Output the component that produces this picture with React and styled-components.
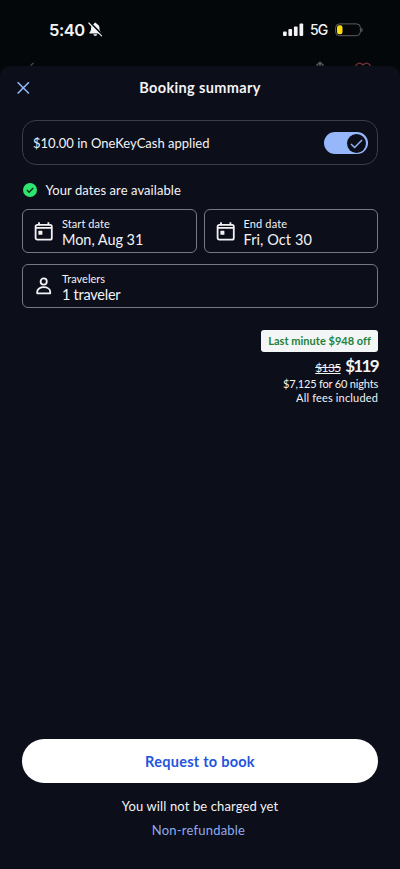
import React from 'react';
import styled, { createGlobalStyle } from 'styled-components';

const GlobalStyle = createGlobalStyle`
  * { box-sizing: border-box; }
  body { margin: 0; background: #04070a; }
`;

const Screen = styled.div`
  height: 869px;
  display: flex;
  flex-direction: column;
  overflow: hidden;
  background: #04070a;
  color: #f3f3f5;
  font-family: Lato, "Open Sans", sans-serif;
`;

const StatusBar = styled.header`
  height: 61px;
  display: flex;
  align-items: center;
  justify-content: space-between;
  padding: 0 37px 2px 49px;
  font-family: Inter, sans-serif;
`;

const StatusGroup = styled.div`
  display: flex;
  align-items: center;
  svg { display: block; }
`;

const Clock = styled.span`
  width: 39px;
  font-size: 16.5px;
  font-weight: 600;
  letter-spacing: -0.5px;
  white-space: nowrap;
`;

const Network = styled.span`
  width: 25px;
  margin-left: 6px;
  font-size: 14px;
  font-weight: 500;
  letter-spacing: -0.8px;
`;

const PagePeek = styled.div`
  height: 5px;
  display: flex;
  justify-content: space-between;
  padding: 0 27px 0 28px;
  svg { display: block; }
`;

const PeekActions = styled.div`
  display: flex;
  gap: 28px;
`;

const Sheet = styled.main`
  flex: 1;
  display: flex;
  flex-direction: column;
  padding: 0 22px;
  border-radius: 10px 10px 0 0;
  background: #0c0e1a;
`;

const SheetHeader = styled.div`
  height: 43px;
  display: grid;
  grid-template-columns: 18px 1fr 18px;
  align-items: center;
  margin-left: -7px;
  margin-right: -7px;
`;

const Title = styled.h1`
  margin: 0;
  text-align: center;
  font-size: 14.5px;
  font-weight: 700;
  line-height: 20px;
  letter-spacing: 0.36px;
`;

const CloseButton = styled.button`
  display: flex;
  width: 16px;
  padding: 0;
  border: 0;
  background: none;
`;

const CashCard = styled.section`
  height: 45px;
  display: flex;
  align-items: center;
  justify-content: space-between;
  margin-top: 11px;
  padding: 1px 9.5px 0 10px;
  border: 1px solid #3b3d49;
  border-radius: 14px;
`;

const Label = styled.span`
  font-size: ${(p) => p.$size || 13}px;
  line-height: ${(p) => p.$line || 18}px;
  letter-spacing: ${(p) => p.$track || 0}px;
  color: ${(p) => p.$color || 'inherit'};
  white-space: nowrap;
`;

const Toggle = styled.button`
  width: 44px;
  height: 22px;
  display: flex;
  align-items: center;
  justify-content: flex-end;
  padding: 0 1.5px;
  border: 0;
  border-radius: 11px;
  background: #96b8fa;
`;

const Knob = styled.span`
  width: 19px;
  height: 19px;
  display: grid;
  place-items: center;
  border-radius: 50%;
  background: #0c0e1a;
`;

const Availability = styled.div`
  height: 18px;
  display: flex;
  align-items: center;
  gap: 8.5px;
  margin-top: 16px;
  padding-left: 1px;
`;

const Fields = styled.div`
  display: grid;
  grid-template-columns: 1fr 1fr;
  gap: 11px 7px;
  margin-top: 10px;
`;

const FieldBox = styled.button`
  grid-column: ${(p) => (p.$wide ? '1 / -1' : 'auto')};
  height: 44px;
  display: flex;
  align-items: center;
  gap: 8px;
  padding: 0 11px;
  border: 1px solid #767884;
  border-radius: 6px;
  background: none;
  color: inherit;
  font: inherit;
  text-align: left;
  svg { display: block; }
`;

const FieldText = styled.span`
  display: flex;
  flex-direction: column;
  padding-top: 2px;
`;

const PriceBlock = styled.section`
  display: flex;
  flex-direction: column;
  align-items: flex-end;
  margin-top: 22px;
`;

const Badge = styled.span`
  height: 22px;
  padding: 0 7px;
  border-radius: 3px;
  background: #f4f5f6;
  color: #1c823c;
  font-size: 11px;
  font-weight: 700;
  line-height: 22px;
  letter-spacing: 0.03px;
`;

const PriceRow = styled.div`
  height: 25px;
  display: flex;
  align-items: baseline;
  gap: 4.5px;
  line-height: 27px;
`;

const OldPrice = styled.s`
  font-size: 12px;
  letter-spacing: -0.6px;
  text-decoration: underline line-through;
`;

const Price = styled.strong`
  margin-right: -1px;
  font-size: 17px;
  font-weight: 700;
  letter-spacing: -1.7px;
  padding-right: 1.2px;
`;

const Footer = styled.footer`
  display: flex;
  flex-direction: column;
  align-items: center;
  margin-top: auto;
  padding-bottom: 24px;
`;

const BookButton = styled.button`
  width: 100%;
  height: 44px;
  margin-bottom: 14px;
  border: 0;
  border-radius: 22px;
  background: #fff;
  color: #1f55dc;
  font-family: inherit;
  font-size: 14.5px;
  font-weight: 700;
  letter-spacing: 0.26px;
`;

const RefundLink = styled.a`
  padding-right: 3px;
  color: #8eabeb;
  font-size: 13px;
  line-height: 30px;
  letter-spacing: 0.2px;
`;

const CalendarIcon = () => (
  <svg width="20" height="20" viewBox="0 0 20 20" fill="none">
    <rect x="1.600" y="3.800" width="16.200" height="14.800" rx="1.700" stroke="#f3f3f5" strokeWidth="1.800" />
    <path d="M1.800 6.900h15.800M5 1.200v3M14.400 1.200v3" stroke="#f3f3f5" strokeWidth="1.800" />
    <rect x="4.400" y="9.800" width="4" height="4" rx=".6" fill="#f3f3f5" />
  </svg>
);

const PersonIcon = () => (
  <svg width="20" height="20" viewBox="0 0 20 20" fill="none" stroke="#f3f3f5" strokeWidth="1.800">
    <circle cx="9.700" cy="5.500" r="3.100" />
    <path d="M3.200 17.300v-1.600c0-2.800 3-4.500 6.500-4.500s6.500 1.700 6.500 4.500v1.600Z" strokeLinejoin="round" />
  </svg>
);

const Field = ({ icon, label, value, wide, labelTrack, valueTrack }) => (
  <FieldBox $wide={wide}>
    {icon}
    <FieldText>
      <Label $size={11} $line={15} $track={labelTrack}>{label}</Label>
      <Label $size={14.5} $line={18} $track={valueTrack}>{value}</Label>
    </FieldText>
  </FieldBox>
);

export default function App() {
  return (
    <Screen>
      <GlobalStyle />
      <StatusBar>
        <StatusGroup>
          <Clock>5:40</Clock>
          <svg width="15" height="15" viewBox="0 0 15 15">
            <path d="M7.3.8c.8 0 1.3.5 1.3 1.2 1.9.6 2.9 2.1 2.9 4 0 2.7.7 3.5 1.6 4.4.5.5.2 1.2-.5 1.2H2c-.7 0-1-.7-.5-1.2C2.400 9.500 3 8.700 3.100 6c0-1.900 1-3.400 2.900-4 0-.7.5-1.200 1.300-1.200ZM5.400 12.300h3.800c-.2 1-.9 1.600-1.900 1.600s-1.700-.6-1.900-1.600Z" fill="#f3f3f5" />
            <path d="M2 .7 14.300 13" stroke="#04070a" strokeWidth="2" />
            <path d="M.8 1 13.600 13.800" stroke="#f3f3f5" strokeWidth="1.100" strokeLinecap="round" />
          </svg>
        </StatusGroup>
        <StatusGroup>
          <svg width="21" height="14" viewBox="0 0 21 14" fill="#f3f3f5">
            <rect x="0" y="8.500" width="3.700" height="4.500" rx="1" />
            <rect x="5.400" y="6" width="3.700" height="7" rx="1" />
            <rect x="10.900" y="3.500" width="3.700" height="9.500" rx="1" />
            <rect x="16.500" y=".5" width="3.700" height="12.500" rx="1" />
          </svg>
          <Network>5G</Network>
          <svg width="28" height="14" viewBox="0 0 28 14">
            <rect x=".6" y=".9" width="24.800" height="11.800" rx="3.800" fill="none" stroke="#5b5d60" />
            <rect x="2" y="2.300" width="5.500" height="9" rx="2.300" fill="#fbdc0b" />
            <path d="M26.400 5v4c.8-.3 1.200-1.100 1.200-2s-.4-1.700-1.200-2Z" fill="#6a6c6f" />
          </svg>
        </StatusGroup>
      </StatusBar>
      <PagePeek>
        <svg width="8" height="5" viewBox="0 0 8 5">
          <path d="M2.500 4.500 5.500 2" stroke="#4a4d52" strokeWidth="1.200" />
        </svg>
        <PeekActions>
          <svg width="10" height="5" viewBox="0 0 10 5">
            <path d="M1.500 4.500 5 1.200l3.500 3.300M5 1.500V5" fill="none" stroke="#565a5e" strokeWidth="1.500" />
          </svg>
          <svg width="20" height="5" viewBox="0 0 20 5">
            <path d="M2.500 5C4.500 1.300 7.500 1.300 10 4c2.500-2.700 5.500-2.700 7.500 1" fill="none" stroke="#713039" strokeWidth="1.400" />
          </svg>
        </PeekActions>
      </PagePeek>
      <Sheet>
        <SheetHeader>
          <CloseButton aria-label="Close">
            <svg width="17" height="16" viewBox="0 0 17 16">
              <path d="M2.800 1.900 14.800 13.900M14.800 1.900 2.800 13.900" stroke="#96b8fa" strokeWidth="1.700" />
            </svg>
          </CloseButton>
          <Title>Booking summary</Title>
        </SheetHeader>
        <CashCard>
          <Label $track={0.01}>$10.00 in OneKeyCash applied</Label>
          <Toggle aria-label="Apply OneKeyCash">
            <Knob>
              <svg width="15" height="13" viewBox="0 0 15 13">
                <path d="m2 7 3.600 3.600L13 3" fill="none" stroke="#96b8fa" strokeWidth="1.400" />
              </svg>
            </Knob>
          </Toggle>
        </CashCard>
        <Availability>
          <svg width="14" height="14" viewBox="0 0 14 14">
            <circle cx="7" cy="7" r="7" fill="#2ee56f" />
            <path d="m3.900 7.100 2.200 2.100 4.100-4.200" fill="none" stroke="#0c2a1a" strokeWidth="1.400" />
          </svg>
          <Label $track={0.08}>Your dates are available</Label>
        </Availability>
        <Fields>
          <Field icon={<CalendarIcon />} label="Start date" value="Mon, Aug 31" labelTrack={0.08} valueTrack={-0.05} />
          <Field icon={<CalendarIcon />} label="End date" value="Fri, Oct 30" labelTrack={0.14} valueTrack={0.08} />
          <Field icon={<PersonIcon />} label="Travelers" value="1 traveler" wide valueTrack={-0.25} />
        </Fields>
        <PriceBlock>
          <Badge>Last minute $948 off</Badge>
          <PriceRow>
            <OldPrice>$135</OldPrice>
            <Price>$119</Price>
          </PriceRow>
          <Label $size={11} $line={14} $track={-0.18}>$7,125 for 60 nights</Label>
          <Label $size={11} $line={14} $track={0.16}>All fees included</Label>
        </PriceBlock>
        <Footer>
          <BookButton>Request to book</BookButton>
          <Label $track={0.12} $line={18}>You will not be charged yet</Label>
          <RefundLink>Non-refundable</RefundLink>
        </Footer>
      </Sheet>
    </Screen>
  );
}
